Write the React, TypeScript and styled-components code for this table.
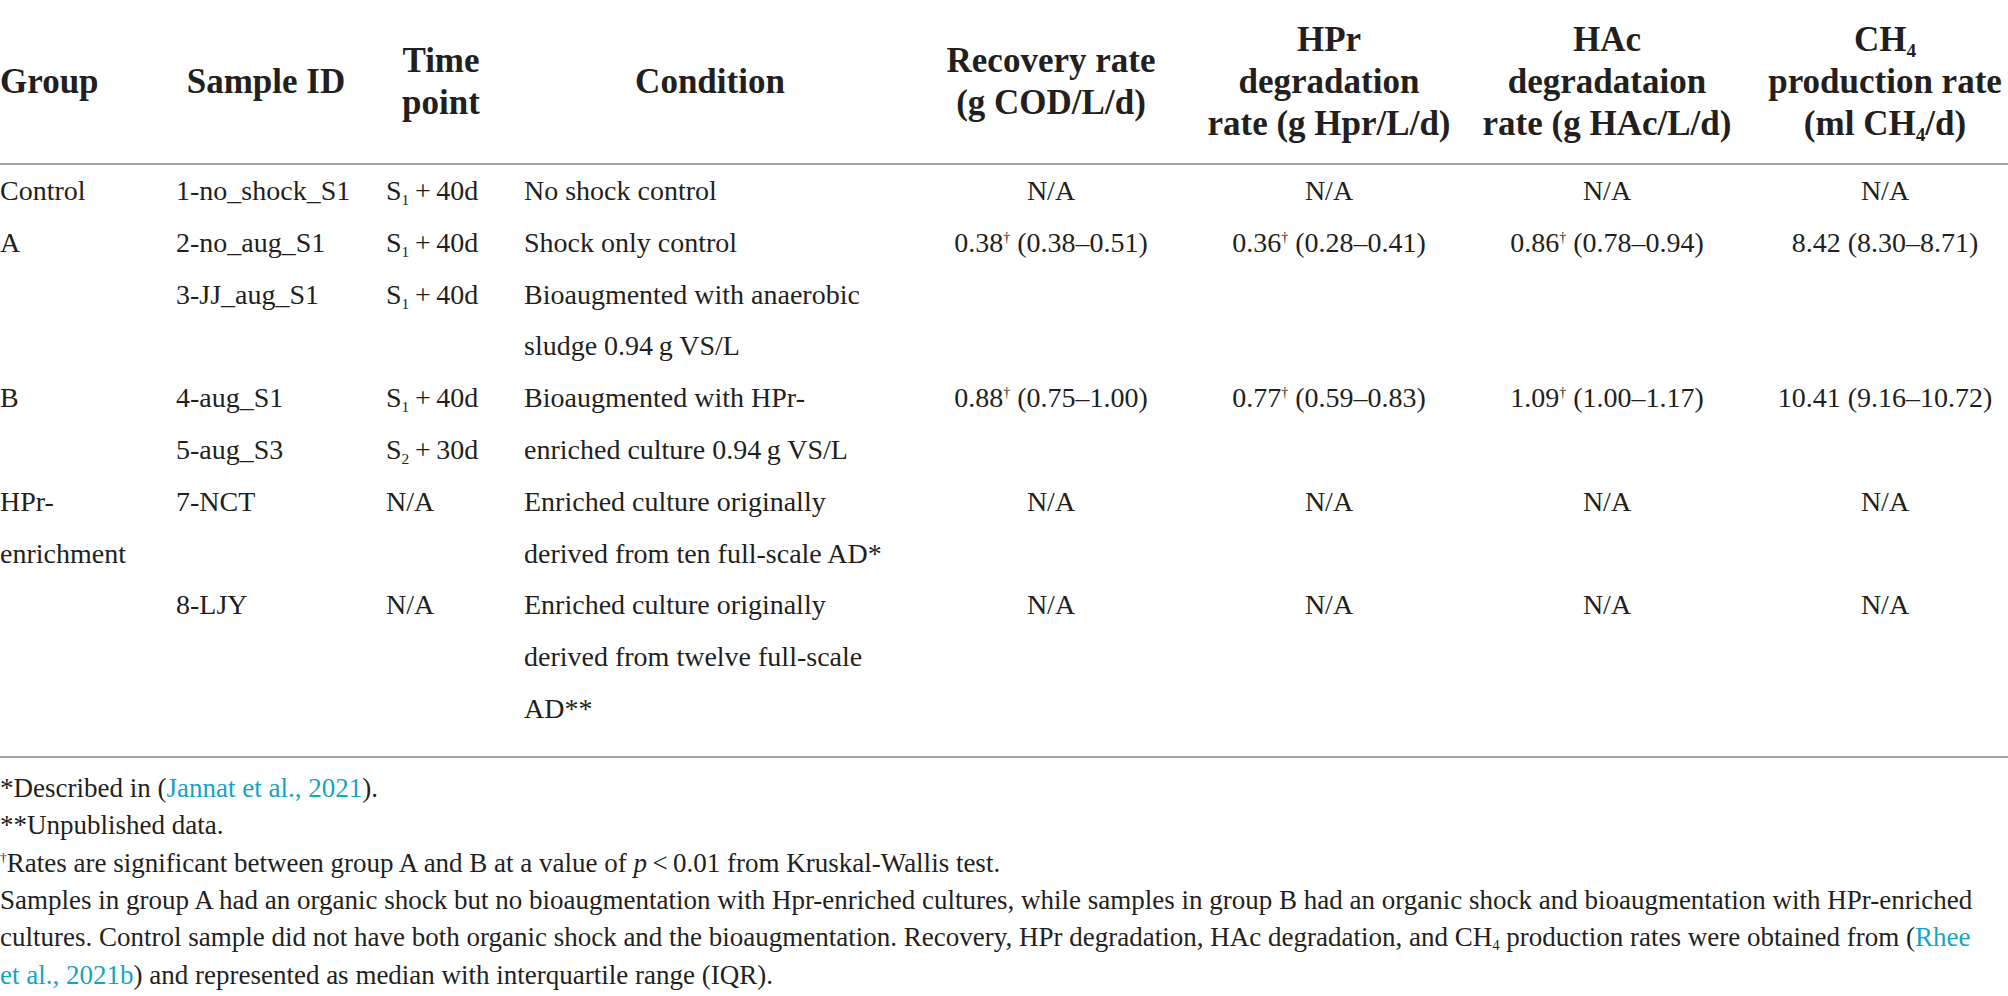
import React from "react";
import styled, { createGlobalStyle } from "styled-components";

const GlobalStyle = createGlobalStyle`
  html, body {
    margin: 0;
    padding: 0;
    background: #ffffff;
    overflow: hidden;
  }
  body {
    font-family: "Liberation Serif", "Times New Roman", serif;
    color: #231f20;
  }
`;

const Page = styled.div`
  width: 2008px;
  overflow: hidden;
`;

const TableFrame = styled.div`
  width: 100%;
  overflow: hidden;
  padding-bottom: 21px;
  border-bottom: 2px solid #a3a3a3;
`;

const DataTable = styled.table`
  width: 2024px;
  table-layout: fixed;
  border-collapse: collapse;
  border-spacing: 0;
`;

const HeadCell = styled.th<{ $align?: "left" | "center"; $inset?: number }>`
  padding: 19px ${(p) => p.$inset ?? 0}px 18px 0;
  font-size: 35px;
  line-height: 42px;
  font-weight: 700;
  text-align: ${(p) => p.$align ?? "center"};
  vertical-align: middle;
  white-space: nowrap;
  border-bottom: 2px solid #a3a3a3;
  color: #231f20;
`;

const Cell = styled.td<{ $align?: "left" | "center" }>`
  padding: 0;
  font-size: 28px;
  line-height: 51.8px;
  text-align: ${(p) => p.$align ?? "left"};
  vertical-align: top;
  white-space: nowrap;
`;

const Sup = styled.sup`
  font-size: 0.5em;
  line-height: 0;
  vertical-align: 0.75em;
`;

const Sub = styled.sub`
  font-size: 0.55em;
  line-height: 0;
  vertical-align: -0.3em;
`;

const Notes = styled.div`
  padding-top: 12px;
  font-size: 27px;
  line-height: 37.4px;
  white-space: nowrap;
`;

const NoteLine = styled.p`
  margin: 0;
`;

const Ref = styled.span`
  color: #14a5c2;
`;

const Italic = styled.i`
  font-style: italic;
`;

const T = "\u2009";

const Time: React.FC<{ s: string; d: string }> = ({ s, d }) => (
  <>
    S<Sub>{s}</Sub>
    {T}+{T}
    {d}
  </>
);

const Rate: React.FC<{ v: string; r: string; dag?: boolean }> = ({ v, r, dag }) => (
  <>
    {v}
    {dag && <Sup>†</Sup>} ({r})
  </>
);

export default function App() {
  return (
    <Page>
      <GlobalStyle />
      <TableFrame>
        <DataTable>
          <colgroup>
            <col style={{ width: 176 }} />
            <col style={{ width: 210 }} />
            <col style={{ width: 138 }} />
            <col style={{ width: 388 }} />
            <col style={{ width: 278 }} />
            <col style={{ width: 278 }} />
            <col style={{ width: 278 }} />
            <col style={{ width: 278 }} />
          </colgroup>
          <thead>
            <tr>
              <HeadCell $align="left">Group</HeadCell>
              <HeadCell $inset={30}>Sample ID</HeadCell>
              <HeadCell $inset={28}>
                Time
                <br />
                point
              </HeadCell>
              <HeadCell $inset={16}>Condition</HeadCell>
              <HeadCell>
                Recovery rate
                <br />
                (g COD/L/d)
              </HeadCell>
              <HeadCell>
                HPr
                <br />
                degradation
                <br />
                rate (g Hpr/L/d)
              </HeadCell>
              <HeadCell>
                HAc
                <br />
                degradataion
                <br />
                rate (g HAc/L/d)
              </HeadCell>
              <HeadCell>
                CH<Sub>4</Sub>
                <br />
                production rate
                <br />
                (ml CH<Sub>4</Sub>/d)
              </HeadCell>
            </tr>
          </thead>
          <tbody>
            <tr>
              <Cell>Control</Cell>
              <Cell>1-no_shock_S1</Cell>
              <Cell>
                <Time s="1" d="40d" />
              </Cell>
              <Cell>No shock control</Cell>
              <Cell $align="center">N/A</Cell>
              <Cell $align="center">N/A</Cell>
              <Cell $align="center">N/A</Cell>
              <Cell $align="center">N/A</Cell>
            </tr>
            <tr>
              <Cell>A</Cell>
              <Cell>2-no_aug_S1</Cell>
              <Cell>
                <Time s="1" d="40d" />
              </Cell>
              <Cell>Shock only control</Cell>
              <Cell $align="center">
                <Rate v="0.38" r="0.38–0.51" dag />
              </Cell>
              <Cell $align="center">
                <Rate v="0.36" r="0.28–0.41" dag />
              </Cell>
              <Cell $align="center">
                <Rate v="0.86" r="0.78–0.94" dag />
              </Cell>
              <Cell $align="center">
                <Rate v="8.42" r="8.30–8.71" />
              </Cell>
            </tr>
            <tr>
              <Cell />
              <Cell>3-JJ_aug_S1</Cell>
              <Cell>
                <Time s="1" d="40d" />
              </Cell>
              <Cell>
                Bioaugmented with anaerobic
                <br />
                sludge 0.94{T}g VS/L
              </Cell>
              <Cell />
              <Cell />
              <Cell />
              <Cell />
            </tr>
            <tr>
              <Cell>B</Cell>
              <Cell>4-aug_S1</Cell>
              <Cell>
                <Time s="1" d="40d" />
              </Cell>
              <Cell rowSpan={2}>
                Bioaugmented with HPr-
                <br />
                enriched culture 0.94{T}g VS/L
              </Cell>
              <Cell $align="center">
                <Rate v="0.88" r="0.75–1.00" dag />
              </Cell>
              <Cell $align="center">
                <Rate v="0.77" r="0.59–0.83" dag />
              </Cell>
              <Cell $align="center">
                <Rate v="1.09" r="1.00–1.17" dag />
              </Cell>
              <Cell $align="center">
                <Rate v="10.41" r="9.16–10.72" />
              </Cell>
            </tr>
            <tr>
              <Cell />
              <Cell>5-aug_S3</Cell>
              <Cell>
                <Time s="2" d="30d" />
              </Cell>
              <Cell />
              <Cell />
              <Cell />
              <Cell />
            </tr>
            <tr>
              <Cell rowSpan={2}>
                HPr-
                <br />
                enrichment
              </Cell>
              <Cell>7-NCT</Cell>
              <Cell>N/A</Cell>
              <Cell>
                Enriched culture originally
                <br />
                derived from ten full-scale AD*
              </Cell>
              <Cell $align="center">N/A</Cell>
              <Cell $align="center">N/A</Cell>
              <Cell $align="center">N/A</Cell>
              <Cell $align="center">N/A</Cell>
            </tr>
            <tr>
              <Cell>8-LJY</Cell>
              <Cell>N/A</Cell>
              <Cell>
                Enriched culture originally
                <br />
                derived from twelve full-scale
                <br />
                AD**
              </Cell>
              <Cell $align="center">N/A</Cell>
              <Cell $align="center">N/A</Cell>
              <Cell $align="center">N/A</Cell>
              <Cell $align="center">N/A</Cell>
            </tr>
          </tbody>
        </DataTable>
      </TableFrame>
      <Notes>
        <NoteLine>
          *Described in (<Ref>Jannat et al., 2021</Ref>).
        </NoteLine>
        <NoteLine>**Unpublished data.</NoteLine>
        <NoteLine>
          <Sup>†</Sup>Rates are significant between group A and B at a value of <Italic>p</Italic>
          {T}&lt;{T}0.01 from Kruskal-Wallis test.
        </NoteLine>
        <NoteLine>
          Samples in group A had an organic shock but no bioaugmentation with Hpr-enriched cultures, while
          samples in group B had an organic shock and bioaugmentation with HPr-enriched
          <br />
          cultures. Control sample did not have both organic shock and the bioaugmentation. Recovery, HPr
          degradation, HAc degradation, and CH<Sub>4</Sub> production rates were obtained from (<Ref>Rhee</Ref>
          <br />
          <Ref>et al., 2021b</Ref>) and represented as median with interquartile range (IQR).
        </NoteLine>
      </Notes>
    </Page>
  );
}
